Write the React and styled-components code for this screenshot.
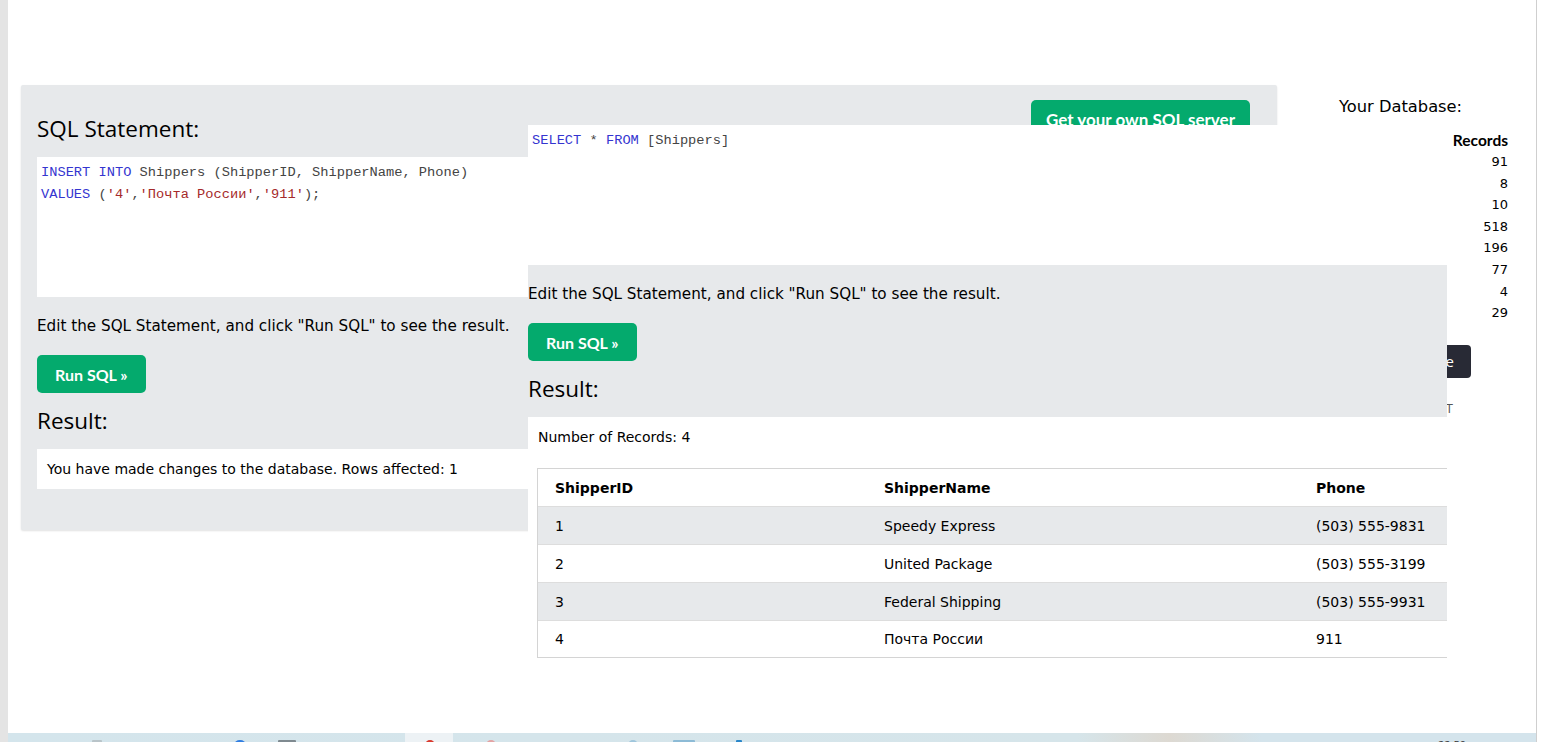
import React from "react";
import styled, { createGlobalStyle } from "styled-components";

const GlobalStyle = createGlobalStyle`
  html, body {
    margin: 0;
    padding: 0;
    background: #fff;
    overflow: hidden;
  }
  * {
    box-sizing: border-box;
  }
`;

const SHIPPERS = [
  { id: 1, name: "Speedy Express", phone: "(503) 555-9831" },
  { id: 2, name: "United Package", phone: "(503) 555-3199" },
  { id: 3, name: "Federal Shipping", phone: "(503) 555-9931" },
  { id: 4, name: "Почта России", phone: "911" },
];

const RECORDS = [91, 8, 10, 518, 196, 77, 4, 29];

const App = () => {
  return (
    <>
      <GlobalStyle />
      <Screen>
        <LeftEdge />
        <Center>
          <Page>
            <Panel>
              <PanelHead>
                <Heading>SQL Statement:</Heading>
                <GreenButton $wide>Get your own SQL server</GreenButton>
              </PanelHead>
              <CodeBox>
                <Kw>INSERT INTO</Kw> Shippers (ShipperID, ShipperName, Phone)
                <br />
                <Kw>VALUES</Kw> (<Str>'4'</Str>,<Str>'Почта России'</Str>,
                <Str>'911'</Str>);
              </CodeBox>
              <Hint>
                Edit the SQL Statement, and click "Run SQL" to see the result.
              </Hint>
              <GreenButton>Run SQL »</GreenButton>
              <Heading $result>Result:</Heading>
              <ResultBox>
                You have made changes to the database. Rows affected: 1
              </ResultBox>
            </Panel>

            <Sidebar>
              <SideTitle>Your Database:</SideTitle>
              <RecordsTable>
                <RecordsHead>Records</RecordsHead>
                {RECORDS.map((n, i) => (
                  <RecordsCell key={i}>{n}</RecordsCell>
                ))}
              </RecordsTable>
              <DarkButton>Restore Database</DarkButton>
              <SideNote>WebSQL is supported in this browser: NOT</SideNote>
            </Sidebar>
          </Page>

          <Taskbar>
            <TaskIcon $left={84} $w={10} $color="#b9c4c9" />
            <TaskIcon $left={226} $w={12} $color="#2f7de1" $round />
            <TaskIcon $left={270} $w={18} $color="#7f8a90" />
            <TaskActive>
              <TaskIcon $left={20} $w={10} $color="#d93a2e" $round />
            </TaskActive>
            <TaskIcon $left={478} $w={10} $color="#e3a3a3" $round />
            <TaskIcon $left={620} $w={10} $color="#9fc6dc" $round />
            <TaskIcon $left={665} $w={22} $color="#8dbbd6" />
            <TaskIcon $left={728} $w={6} $color="#2a86c9" />
            <Clock>22:50</Clock>
          </Taskbar>
        </Center>
        <RightEdge />

        {/* pasted screenshot lying over the page */}
        <Snippet>
          <SnipCode>
            <Kw>SELECT</Kw> * <Kw>FROM</Kw> [Shippers]
          </SnipCode>
          <SnipGray>
            <Hint>
              Edit the SQL Statement, and click "Run SQL" to see the result.
            </Hint>
            <GreenButton>Run SQL »</GreenButton>
            <Heading $result>Result:</Heading>
          </SnipGray>
          <SnipWhite>
            <Count>Number of Records: 4</Count>
            <Table>
              <Row $head>
                <Cell $bold>ShipperID</Cell>
                <Cell $bold>ShipperName</Cell>
                <Cell $bold>Phone</Cell>
              </Row>
              {SHIPPERS.map((s, i) => (
                <Row key={s.id} $striped={i % 2 === 0} $last={i === SHIPPERS.length - 1}>
                  <Cell>{s.id}</Cell>
                  <Cell>{s.name}</Cell>
                  <Cell>{s.phone}</Cell>
                </Row>
              ))}
            </Table>
          </SnipWhite>
        </Snippet>
      </Screen>
    </>
  );
};

// Screen frame
const Screen = styled.div`
  position: relative;
  width: 1548px;
  height: 742px;
  display: flex;
  overflow: hidden;
  background: #fff;
`;

const LeftEdge = styled.div`
  width: 8px;
  flex: none;
  background: #e4e4e4;
`;

const RightEdge = styled.div`
  width: 12px;
  flex: none;
  background: #fff;
  border-left: 1px solid #cfcfcf;
`;

const Center = styled.div`
  flex: 1;
  min-width: 0;
  display: flex;
  flex-direction: column;
`;

const Page = styled.div`
  flex: 1;
  display: flex;
  align-items: flex-start;
  padding-top: 85px;
  overflow: hidden;
`;

// Main tryit panel
const Panel = styled.div`
  width: 1256px;
  margin-left: 13px;
  flex: none;
  background: #e7e9eb;
  padding: 15px 27px 41px 16px;
  border-radius: 2px;
  box-shadow: 0 1px 2px rgba(0, 0, 0, 0.12);
  display: flex;
  flex-direction: column;
  align-items: flex-start;
`;

const PanelHead = styled.div`
  width: 100%;
  height: 57px;
  display: flex;
  justify-content: space-between;
  align-items: flex-start;

  & > h3 {
    margin-top: 14px;
  }
`;

const Heading = styled.h3`
  margin: ${(p) => (p.$result ? "13px 0 13px" : "0")};
  font-family: "Open Sans", "Noto Sans", sans-serif;
  font-weight: 400;
  font-size: 22.5px;
  line-height: 30px;
  color: #000;
`;

const GreenButton = styled.button`
  height: 38px;
  padding: 0 ${(p) => (p.$wide ? "15px" : "18px")};
  border: none;
  border-radius: 5px;
  background: #04aa6d;
  color: #fff;
  font-family: "Lato", "Open Sans", sans-serif;
  font-weight: 700;
  font-size: ${(p) => (p.$wide ? "17px" : "16px")};
  cursor: pointer;
`;

const CodeBox = styled.div`
  width: 100%;
  height: 140px;
  background: #fff;
  padding: 5px 4px 4px;
  font-family: "Liberation Mono", "DejaVu Sans Mono", monospace;
  font-size: 13.7px;
  line-height: 22px;
  color: #444;
  white-space: nowrap;
`;

const Kw = styled.span`
  color: #3535d0;
`;

const Str = styled.span`
  color: #a52a2a;
`;

const Hint = styled.p`
  margin: 18px 0;
  font-family: "DejaVu Sans", Verdana, sans-serif;
  font-size: 15.2px;
  line-height: 22px;
  color: #000;
  white-space: nowrap;
`;

const ResultBox = styled.div`
  width: 100%;
  height: 40px;
  background: #fff;
  padding: 0 10px;
  font-family: "DejaVu Sans", Verdana, sans-serif;
  font-size: 14px;
  line-height: 40px;
  color: #000;
`;

// Right sidebar
const Sidebar = styled.div`
  flex: 1;
  min-width: 0;
  padding: 10px 28px 0 0;
  display: flex;
  flex-direction: column;
  align-items: flex-end;
`;

const SideTitle = styled.div`
  align-self: flex-start;
  padding-left: 62px;
  font-family: "DejaVu Sans", Verdana, sans-serif;
  font-size: 16.3px;
  line-height: 24px;
  color: #000;
  white-space: nowrap;
`;

const RecordsTable = styled.div`
  margin-top: 10px;
  display: flex;
  flex-direction: column;
  align-items: flex-end;
`;

const RecordsHead = styled.div`
  font-family: "Lato", sans-serif;
  font-weight: 700;
  font-size: 15.5px;
  line-height: 22px;
  color: #000;
`;

const RecordsCell = styled.div`
  font-family: "DejaVu Sans", Verdana, sans-serif;
  font-size: 13px;
  line-height: 21.6px;
  color: #000;
`;

const DarkButton = styled.button`
  margin: 21px 37px 0 0;
  height: 33px;
  padding: 0 17px;
  border: none;
  border-radius: 4px;
  background: #282a35;
  color: #fff;
  font-family: "Open Sans", sans-serif;
  font-size: 15px;
  white-space: nowrap;
  flex: none;
`;

const SideNote = styled.div`
  margin: 21px 55px 0 0;
  font-family: "Open Sans", sans-serif;
  font-size: 13px;
  line-height: 18px;
  color: #555;
  white-space: nowrap;
`;

// Taskbar at bottom of the screen
const Taskbar = styled.div`
  position: relative;
  height: 9px;
  flex: none;
  background: linear-gradient(90deg, #d4e5ec 0%, #d6e5ea 70%, #ddd9d2 76%, #d4e4ec 82%);
  overflow: hidden;
`;

const TaskIcon = styled.span`
  position: absolute;
  top: 7px;
  left: ${(p) => p.$left}px;
  width: ${(p) => p.$w}px;
  height: 10px;
  border-radius: ${(p) => (p.$round ? "50%" : "1px")};
  background: ${(p) => p.$color};
`;

const TaskActive = styled.div`
  position: absolute;
  top: 0;
  left: 397px;
  width: 48px;
  height: 9px;
  background: #edf2f5;
`;

const Clock = styled.span`
  position: absolute;
  top: 4px;
  left: 1430px;
  font-family: "Open Sans", sans-serif;
  font-size: 11px;
  color: #333;
`;

// Pasted screenshot on top
const Snippet = styled.div`
  position: absolute;
  left: 528px;
  top: 125px;
  width: 919px;
  height: 535px;
  overflow: hidden;
  background: #fff;
  display: flex;
  flex-direction: column;
`;

const SnipCode = styled.div`
  height: 140px;
  flex: none;
  padding: 5px 4px 4px;
  font-family: "Liberation Mono", "DejaVu Sans Mono", monospace;
  font-size: 13.7px;
  line-height: 22px;
  color: #444;
  white-space: nowrap;
`;

const SnipGray = styled.div`
  height: 152px;
  flex: none;
  background: #e7e9eb;
  display: flex;
  flex-direction: column;
  align-items: flex-start;

  & > p {
    margin-top: 18px;
  }
  & > h3 {
    margin-bottom: 0;
  }
`;

const SnipWhite = styled.div`
  flex: 1;
  padding: 10px 0 0 9px;
`;

const Count = styled.div`
  padding-left: 1px;
  font-family: "DejaVu Sans", Verdana, sans-serif;
  font-size: 14px;
  line-height: 20px;
  color: #000;
`;

const Table = styled.div`
  margin-top: 21px;
  width: 1000px;
  border: 1px solid #d4d4d4;
`;

const Row = styled.div`
  height: ${(p) => (p.$last ? "36px" : "38px")};
  display: grid;
  grid-template-columns: 329px 432px 1fr;
  align-items: center;
  background: ${(p) => (p.$striped ? "#e7e9eb" : "#fff")};
  border-bottom: ${(p) => (p.$last ? "none" : "1px solid #dddddd")};
`;

const Cell = styled.div`
  padding-left: 17px;
  font-family: "DejaVu Sans", Verdana, sans-serif;
  font-size: 14px;
  font-weight: ${(p) => (p.$bold ? 700 : 400)};
  color: #000;
  white-space: nowrap;
`;

export default App;
